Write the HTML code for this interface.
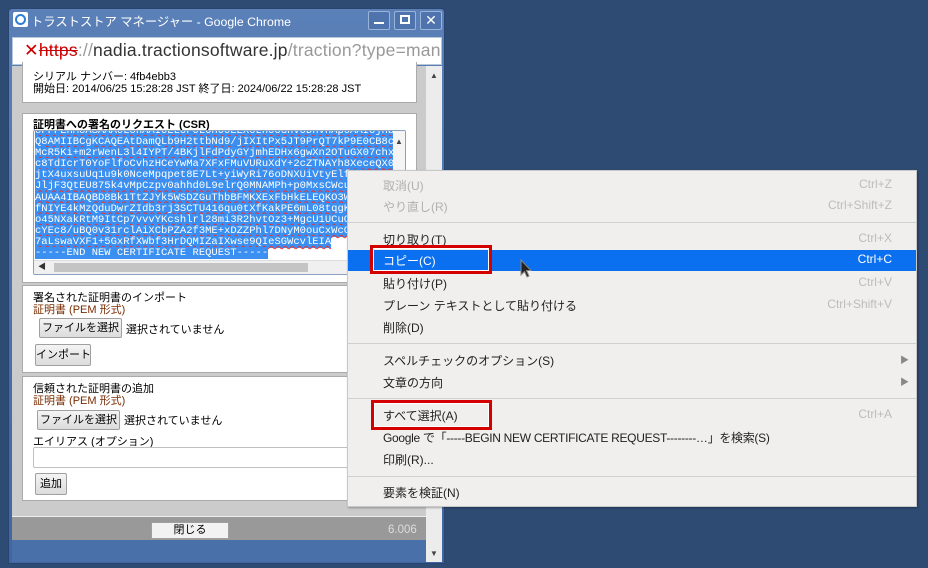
<!DOCTYPE html>
<html><head><meta charset="utf-8"><style>
*{margin:0;padding:0;box-sizing:border-box}
body{width:928px;height:568px;overflow:hidden;background:#2e4b73;font-family:"Liberation Sans","Noto Sans CJK JP",sans-serif;position:relative}
.a{position:absolute}
.t{font-size:11px;color:#000;white-space:nowrap}
.csr{font-family:"Liberation Mono","Noto Sans CJK JP",monospace;font-size:10.5px;line-height:11.1px;color:#fff;white-space:nowrap}
.csr span{background:#3a8ff0;text-decoration:underline wavy #e33;text-decoration-thickness:1px}
.btn{position:absolute;background:linear-gradient(#f4f4f4,#dcdcdc);border:1px solid #a0a0a0;border-radius:2px;font-size:11px;text-align:center;line-height:19px;white-space:nowrap}
.mi{position:absolute;left:383px;font-size:12px;color:#222;white-space:nowrap}
.sc{position:absolute;right:36px;font-size:12px;color:#bcbcbc;white-space:nowrap}
.dis{color:#b0b0b0}
.sep{position:absolute;left:348px;width:568px;height:1px;background:#cfcfcf}
</style></head><body>
<!-- window -->
<div class="a" style="left:8px;top:8px;width:437px;height:556px;background:linear-gradient(#5b80b8,#3f66a3);border:1px solid #2a4470;border-radius:4px 4px 0 0"></div>
<div class="a" style="left:13px;top:12px;width:15px;height:15px;background:#fff;border-radius:2px"></div>
<div class="a" style="left:15px;top:14px;width:11px;height:11px;border:2.5px solid #2f7fd6;border-radius:50%"></div>
<div class="a t" style="left:31px;top:12px;font-size:12.3px;color:#fff">トラストストア マネージャー - Google Chrome</div>
<div class="a" style="left:368px;top:11px;width:22px;height:19px;border:1px solid #9bb4da;border-radius:2px;background:#4f74ad"></div>
<div class="a" style="left:374px;top:22px;width:10px;height:2px;background:#fff"></div>
<div class="a" style="left:394px;top:11px;width:22px;height:19px;border:1px solid #9bb4da;border-radius:2px;background:#4f74ad"></div>
<div class="a" style="left:400px;top:15px;width:10px;height:9px;border:2px solid #fff"></div>
<div class="a" style="left:420px;top:11px;width:22px;height:19px;border:1px solid #9bb4da;border-radius:2px;background:#4f74ad;color:#fff;font-size:14px;text-align:center;line-height:17px">✕</div>
<!-- address -->
<div class="a" style="left:12px;top:37px;width:430px;height:28px;background:#fff;border:1px solid #b8c6da"></div>
<div class="a t" style="left:24px;top:40px;font-size:17.5px;color:#999;letter-spacing:0.2px"><span style="color:#c00">✕</span><span style="color:#c00;text-decoration:line-through">https</span>://<span style="color:#333">nadia.tractionsoftware.jp</span>/traction?type=man</div>
<!-- content -->
<div class="a" style="left:12px;top:66px;width:416px;height:474px;background:#cbcbcb"></div>
<div class="a" style="left:426px;top:66px;width:16px;height:496px;background:#ececec"></div>
<div class="a t" style="left:430px;top:71px;font-size:8px;color:#444">▲</div>
<div class="a t" style="left:430px;top:549px;font-size:8px;color:#444">▼</div>
<!-- panel1 -->
<div class="a" style="left:22px;top:62px;width:395px;height:41px;background:#fff;border:1px solid #aaa;border-top:none"></div>
<div class="a t" style="left:33px;top:68px">シリアル ナンバー: 4fb4ebb3</div>
<div class="a t" style="left:33px;top:80px">開始日: 2014/06/25 15:28:28 JST 終了日: 2024/06/22 15:28:28 JST</div>
<!-- panel2 -->
<div class="a" style="left:22px;top:113px;width:395px;height:170px;background:#fff;border:1px solid #aaa"></div>
<div class="a t" style="left:33px;top:116px;font-weight:bold">証明書への署名のリクエスト (CSR)</div>
<div class="a" style="left:33px;top:130px;width:373px;height:145px;border:1px solid #8aa0c0;border-radius:2px;background:#fff;overflow:hidden">
<div class="csr" style="position:absolute;left:1px;top:-5px">
<span>oFFFEhMoASAAA0LohAAIOELOF0LOhO0EEX0LhOOGhVODhVhAp0AAIOjhbOgAq</span><br>
<span>Q8AMIIBCgKCAQEAtDamQLb9H2ttbNd9/jIXItPx5JT9PrQT7kP9E0CB8clH</span><br>
<span>McR5Ki+m2rWenL3l4IYPT/4BKjlFdPdyGYjmhEDHx6gwXn2OTuGX07chxLT</span><br>
<span>c8TdIcrT0YoFlfoCvhzHCeYwMa7XFxFMuVURuXdY+2cZTNAYh8XeceQX028</span><br>
<span>jtX4uxsuUq1u9k0NceMpqpet8E7Lt+yiWyRi76oDNXUiVtyElfyC</span><br>
<span>JljF3QtEU875k4vMpCzpv0ahhd0L9elrQ0MNAMPh+p0MxsCWcuTI</span><br>
<span>AUAA4IBAQBD8Bk1TtZJYk5WSDZGuThbBFMKXExFbHkELEQKO3WDR</span><br>
<span>fNIYE4kMzQduDwrZIdb3rj3SCTU416qu0tXfKakPE6mL08tqgK1+</span><br>
<span>o45NXakRtM9ItCp7vvvYKcshlrl28mi3R2hvtOz3+MgcU1UCuObl</span><br>
<span>cYEc8/uBQ0v31rclAiXCbPZA2f3ME+xDZZPhl7DNyM0ouCxWcOEj</span><br>
<span>7aLswaVXF1+5GxRfXWbf3HrDQMIZaIXwse9QIeSGWcvlEIA</span><br>
<span style="text-decoration:none">-----END NEW CERTIFICATE REQUEST-----</span></div>
<div class="a" style="left:0;top:129px;width:371px;height:14px;background:#f0f0f0;border-top:1px solid #ddd"></div>
<div class="a" style="left:20px;top:132px;width:254px;height:9px;background:#c4c4c4"></div>
<div class="a t" style="left:4px;top:130px;font-size:8px;color:#333">◀</div>
<div class="a" style="left:359px;top:0;width:12px;height:129px;background:#f4f4f4"></div>
<div class="a t" style="left:361px;top:6px;font-size:8px;color:#444">▲</div>
</div>
<!-- panel3 -->
<div class="a" style="left:22px;top:285px;width:395px;height:88px;background:#fff;border:1px solid #aaa"></div>
<div class="a t" style="left:33px;top:289px">署名された証明書のインポート</div>
<div class="a t" style="left:33px;top:301px;color:#7a2c00">証明書 (PEM 形式)</div>
<div class="btn" style="left:39px;top:318px;width:83px;height:20px">ファイルを選択</div>
<div class="a t" style="left:126px;top:321px">選択されていません</div>
<div class="btn" style="left:35px;top:344px;width:56px;height:22px;line-height:21px">インポート</div>
<!-- panel4 -->
<div class="a" style="left:22px;top:376px;width:395px;height:125px;background:#fff;border:1px solid #aaa"></div>
<div class="a t" style="left:33px;top:380px">信頼された証明書の追加</div>
<div class="a t" style="left:33px;top:392px;color:#7a2c00">証明書 (PEM 形式)</div>
<div class="btn" style="left:37px;top:410px;width:83px;height:20px">ファイルを選択</div>
<div class="a t" style="left:124px;top:412px">選択されていません</div>
<div class="a t" style="left:33px;top:433px">エイリアス (オプション)</div>
<div class="a" style="left:33px;top:447px;width:320px;height:21px;border:1px solid #c0c0c0;border-radius:2px;background:#fff"></div>
<div class="btn" style="left:35px;top:473px;width:32px;height:22px;line-height:21px">追加</div>
<!-- bottom bar -->
<div class="a" style="left:12px;top:516px;width:414px;height:24px;background:#999;border-top:1px solid #eee"></div>
<div class="btn" style="left:151px;top:522px;width:78px;height:17px;line-height:15px;border-radius:0;background:#f2f2f2">閉じる</div>
<div class="a t" style="left:388px;top:524px;color:#ddd;font-size:11.5px">6.006</div>
<div class="a" style="left:12px;top:540px;width:414px;height:22px;background:#4a70aa"></div>
<!-- context menu -->
<div class="a" style="left:347px;top:170px;width:570px;height:337px;background:#f0efee;border:1px solid #c8c8c8;box-shadow:1px 1px 2px rgba(0,0,0,.3)"></div>
<div class="mi dis" style="top:177px">取消(U)</div><div class="sc" style="top:177px">Ctrl+Z</div>
<div class="mi dis" style="top:198px">やり直し(R)</div><div class="sc" style="top:198px">Ctrl+Shift+Z</div>
<div class="sep" style="top:222px"></div>
<div class="mi" style="top:231px">切り取り(T)</div><div class="sc" style="top:231px">Ctrl+X</div>
<div class="a" style="left:348px;top:250px;width:568px;height:21px;background:#0a70f0"></div>
<div class="mi" style="top:252px;color:#fff">コピー(C)</div><div class="sc" style="top:252px;color:#fff">Ctrl+C</div>
<div class="mi" style="top:275px">貼り付け(P)</div><div class="sc" style="top:275px">Ctrl+V</div>
<div class="mi" style="top:297px">プレーン テキストとして貼り付ける</div><div class="sc" style="top:297px">Ctrl+Shift+V</div>
<div class="mi" style="top:319px">削除(D)</div>
<div class="sep" style="top:343px"></div>
<div class="mi" style="top:352px">スペルチェックのオプション(S)</div><div class="a" style="left:900px;top:353px;font-size:9px;color:#888">▶</div>
<div class="mi" style="top:374px">文章の方向</div><div class="a" style="left:900px;top:375px;font-size:9px;color:#888">▶</div>
<div class="sep" style="top:398px"></div>
<div class="mi" style="top:407px">すべて選択(A)</div><div class="sc" style="top:407px">Ctrl+A</div>
<div class="mi" style="top:429px;letter-spacing:-0.3px">Google で「-----BEGIN NEW CERTIFICATE REQUEST--------…」を検索(S)</div>
<div class="mi" style="top:451px">印刷(R)...</div>
<div class="sep" style="top:476px"></div>
<div class="mi" style="top:484px">要素を検証(N)</div>
<!-- red boxes -->
<div class="a" style="left:370px;top:245px;width:122px;height:29px;border:3px solid #d40000"></div>
<div class="a" style="left:373px;top:248px;width:116px;height:23px;border:1px solid #fff"></div>
<div class="a" style="left:371px;top:400px;width:121px;height:30px;border:3px solid #d40000"></div>
<div class="a" style="left:374px;top:403px;width:115px;height:24px;border:1px solid #fff"></div>
<!-- cursor -->
<svg class="a" style="left:520px;top:259px" width="14" height="20" viewBox="0 0 14 20"><path d="M1 1 L1 16 L4.5 12.5 L7 18 L9 17 L6.5 11.5 L11 11.5 Z" fill="#222" stroke="#888" stroke-width="1"/></svg>
</body></html>
